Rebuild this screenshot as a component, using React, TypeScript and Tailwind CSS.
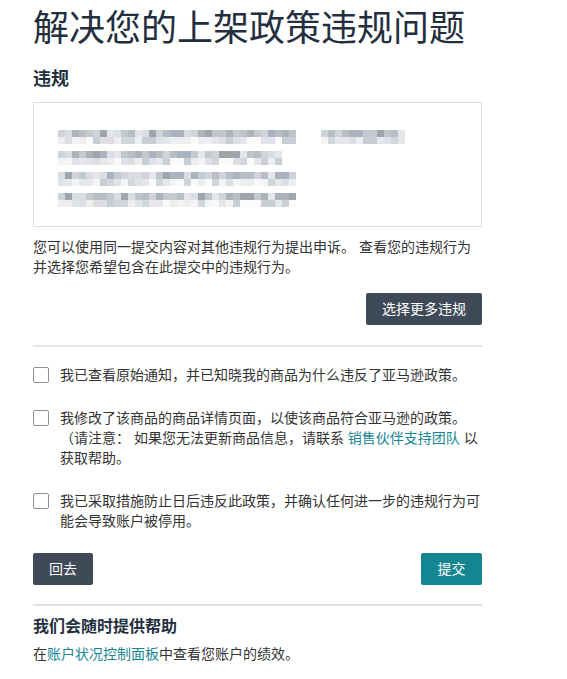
const font = { fontFamily: '"Liberation Sans", "Noto Sans CJK SC", sans-serif' };

// deterministic pseudo-random for the blurred mosaic
function makeRand(seed: number) {
  let s = seed;
  return () => {
    s = (s * 9301 + 49297) % 233280;
    return s / 233280;
  };
}

const darkRow = ['#9fa4ad', '#adb2bb', '#b9bdc6', '#c5c9d0', '#d0d3d9', '#dadde2', '#aab3c2', '#e4e6ea', '#c0c4cc'];
const lightRow = ['#d2d5da', '#dcdee2', '#e5e7ea', '#eceef0', '#f3f4f6', '#c9cdd4', '#fafafa', '#dfe3e9'];

function MosaicLine({ segments, seed }: { segments: [number, number][]; seed: number }) {
  const rand = makeRand(seed);
  return (
    <div className="flex flex-col">
      {[darkRow, lightRow].map((palette, r) => (
        <div key={r} className="flex h-[7px]">
          {segments.map(([blocks, gap], i) => (
            <div key={i} className="flex" style={{ marginRight: gap }}>
              {Array.from({ length: blocks }).map((_, j) => (
                <div
                  key={j}
                  className="w-[7px] h-[7px]"
                  style={{ backgroundColor: palette[Math.floor(rand() * palette.length)] }}
                />
              ))}
            </div>
          ))}
        </div>
      ))}
    </div>
  );
}

function Checkbox() {
  return <span className="mt-[2px] w-[16px] h-[16px] shrink-0 border border-[#8d9096] rounded-[2px] bg-white" />;
}

export default function App() {
  return (
    <div className="bg-white min-h-[679px] text-[#333]" style={font}>
      <div className="ml-[33px] w-[449px] pt-[5px]">
        <h1 className="text-[36px] leading-[48px] text-[#232f3e] font-normal">解决您的上架政策违规问题</h1>

        <h2 className="mt-[14px] text-[18px] leading-[24px] font-bold text-[#232f3e]">违规</h2>

        {/* Violation box (blurred) */}
        <div className="mt-[11px] h-[125px] border border-[#dcdcdc] pl-[24px] pt-[27px] flex flex-col gap-[7px]">
          <MosaicLine segments={[[34, 25], [12, 0]]} seed={7} />
          <MosaicLine segments={[[32, 0]]} seed={31} />
          <MosaicLine segments={[[34, 0]]} seed={59} />
          <MosaicLine segments={[[34, 0]]} seed={83} />
        </div>

        <p className="mt-[10px] text-[14px] leading-[20px]">
          您可以使用同一提交内容对其他违规行为提出申诉。 查看您的违规行为
          <br />
          并选择您希望包含在此提交中的违规行为。
        </p>

        <div className="mt-[16px] flex justify-end">
          <button className="h-[32px] px-[16px] rounded-[2px] bg-[#3f4a59] text-white text-[14px]">选择更多违规</button>
        </div>

        <div className="mt-[20px] h-[2px] bg-[#e6e6e6]" />

        <div className="mt-[18px] flex flex-col gap-[23px] text-[14px] leading-[20px]">
          <div className="flex gap-[11px]">
            <Checkbox />
            <p>我已查看原始通知，并已知晓我的商品为什么违反了亚马逊政策。</p>
          </div>
          <div className="flex gap-[11px]">
            <Checkbox />
            <p>
              我修改了该商品的商品详情页面，以使该商品符合亚马逊的政策。
              <br />
              （请注意： 如果您无法更新商品信息，请联系 <a href="#" className="text-[#178693]">销售伙伴支持团队</a> 以
              <br />
              获取帮助。
            </p>
          </div>
          <div className="flex gap-[11px]">
            <Checkbox />
            <p>
              我已采取措施防止日后违反此政策，并确认任何进一步的违规行为可
              <br />
              能会导致账户被停用。
            </p>
          </div>
        </div>

        <div className="mt-[22px] flex justify-between">
          <button className="h-[32px] w-[60px] rounded-[2px] bg-[#3f4a59] text-white text-[14px]">回去</button>
          <button className="h-[32px] w-[61px] rounded-[2px] bg-[#168592] text-white text-[14px]">提交</button>
        </div>

        <div className="mt-[19px] h-[2px] bg-[#e0e0e0]" />

        <h3 className="mt-[10px] text-[16px] leading-[22px] font-bold text-[#232f3e]">我们会随时提供帮助</h3>
        <p className="mt-[6px] text-[14px] leading-[20px]">
          在<a href="#" className="text-[#178693]">账户状况控制面板</a>中查看您账户的绩效。
        </p>
      </div>
    </div>
  );
}
